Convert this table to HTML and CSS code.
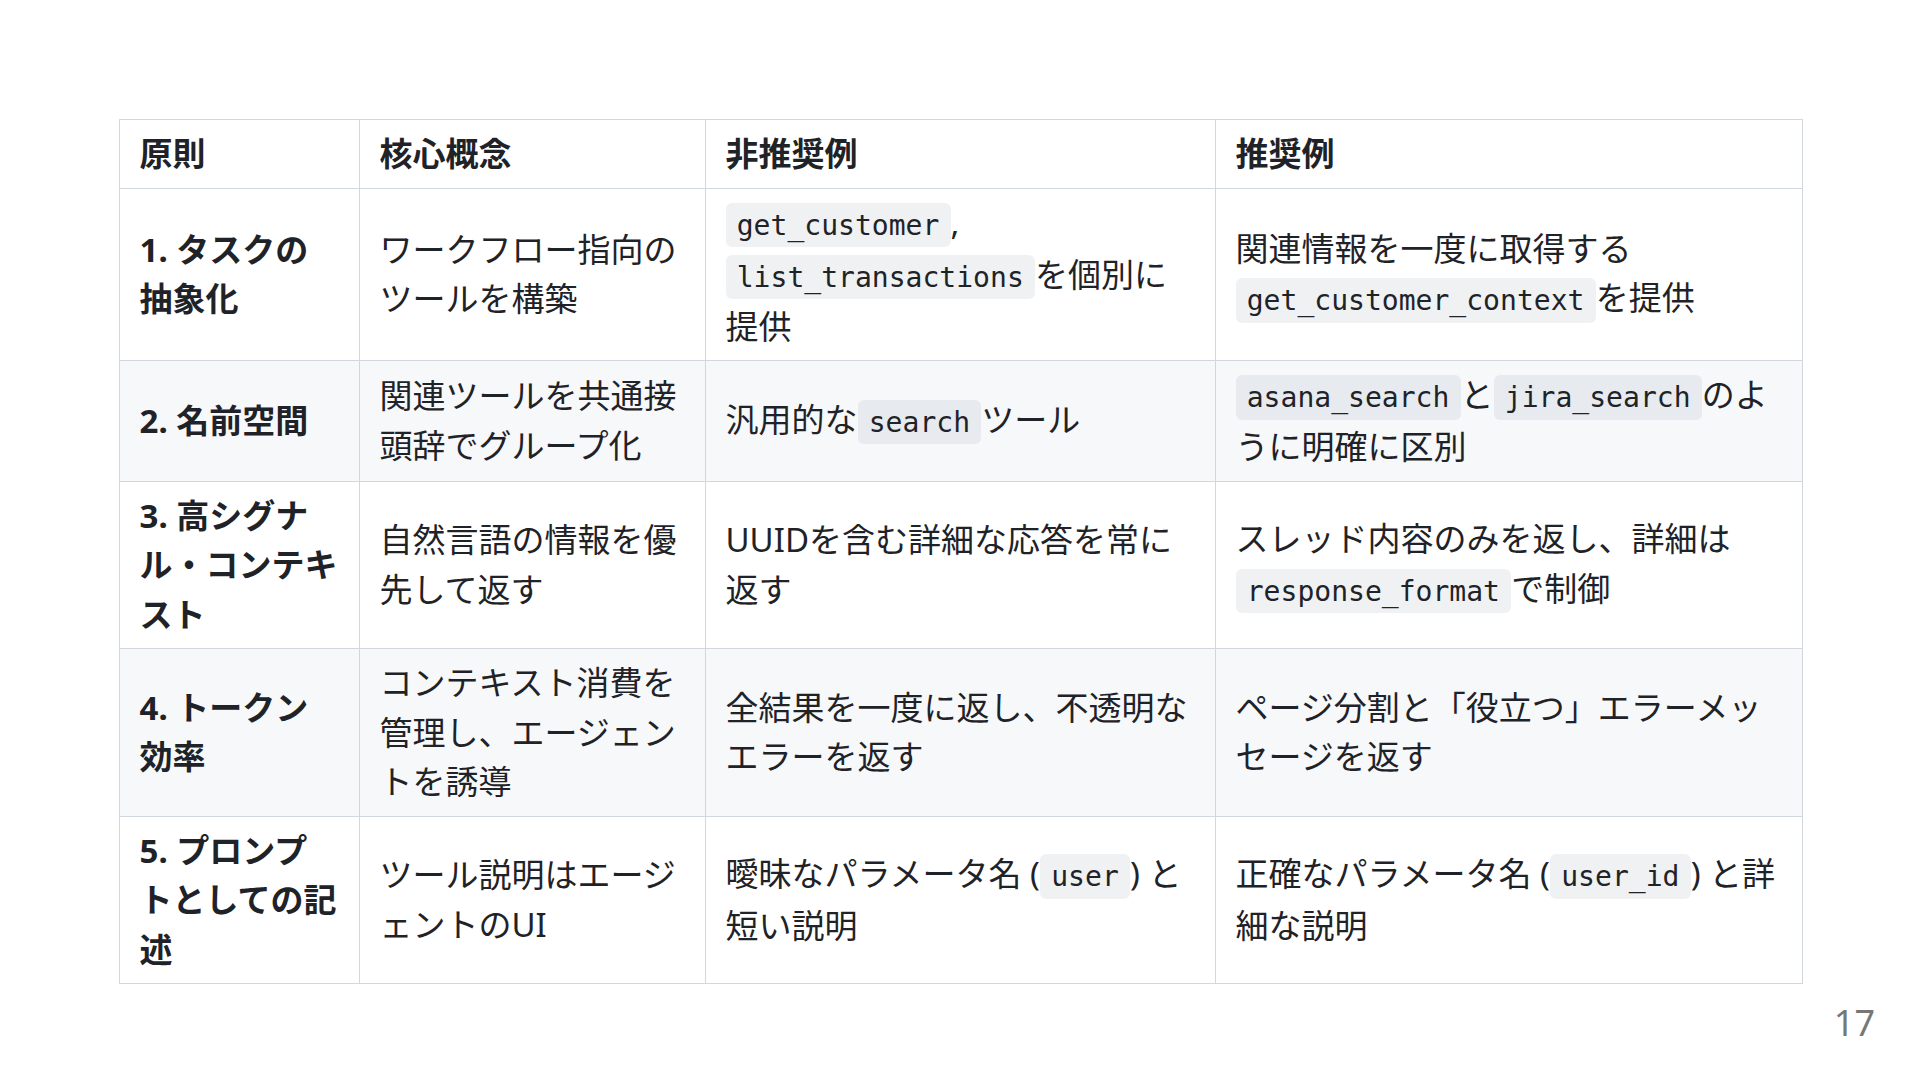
FILE: index.html
```html
<!DOCTYPE html>
<html lang="ja">
<head>
<meta charset="utf-8">
<title>Slide 17</title>
<link rel="stylesheet" href="styles.css">
</head>
<body>
<section class="slide">
  <table class="grid">
    <colgroup>
      <col class="c1"><col class="c2"><col class="c3"><col class="c4">
    </colgroup>
    <thead>
      <tr><th>原則</th><th>核心概念</th><th>非推奨例</th><th>推奨例</th></tr>
    </thead>
    <tbody>
      <tr>
        <td><strong>1. タスクの抽象化</strong></td>
        <td>ワークフロー指向のツールを構築</td>
        <td><code>get_customer</code>, <code>list_transactions</code>を個別に提供</td>
        <td>関連情報を一度に取得する<code>get_customer_context</code>を提供</td>
      </tr>
      <tr>
        <td><strong>2. 名前空間</strong></td>
        <td>関連ツールを共通接頭辞でグループ化</td>
        <td>汎用的な<code>search</code>ツール</td>
        <td><code>asana_search</code>と<code>jira_search</code>のように明確に区別</td>
      </tr>
      <tr>
        <td><strong>3. 高シグナル・コンテキスト</strong></td>
        <td>自然言語の情報を優先して返す</td>
        <td>UUIDを含む詳細な応答を常に返す</td>
        <td>スレッド内容のみを返し、詳細は<code>response_format</code>で制御</td>
      </tr>
      <tr>
        <td><strong>4. トークン効率</strong></td>
        <td>コンテキスト消費を管理し、エージェントを誘導</td>
        <td>全結果を一度に返し、不透明なエラーを返す</td>
        <td>ページ分割と「役立つ」エラーメッセージを返す</td>
      </tr>
      <tr>
        <td><strong>5. プロンプトとしての記述</strong></td>
        <td>ツール説明はエージェントのUI</td>
        <td>曖昧なパラメータ名 (<code>user</code>) と短い説明</td>
        <td>正確なパラメータ名 (<code>user_id</code>) と詳細な説明</td>
      </tr>
    </tbody>
  </table>
  <footer class="pager">17</footer>
</section>
</body>
</html>
```

FILE: styles.css
```css
html, body {
  margin: 0;
  padding: 0;
  background: #ffffff;
}

.slide {
  box-sizing: border-box;
  width: 1920px;
  height: 1080px;
  padding: 119px 118px 0 119px;
  display: flex;
  flex-direction: column;
  font-family: "Noto Sans", "Noto Sans CJK JP", sans-serif;
  font-size: 33px;
  line-height: 1.5;
  color: #1f2328;
}

.grid {
  width: 1683px;
  table-layout: fixed;
  border-collapse: collapse;
  border-spacing: 0;
}

.c1 { width: 240px; }
.c2 { width: 346px; }
.c3 { width: 510px; }
.c4 { width: 587px; }

.grid th,
.grid td {
  border: 1px solid #d0d7de;
  padding: 9px 19.5px;
  text-align: left;
  vertical-align: middle;
  word-break: normal;
  overflow-wrap: normal;
}

.grid th {
  font-weight: 700;
}

.grid td strong {
  font-weight: 700;
}

.grid tbody tr {
  background: #ffffff;
}

.grid tbody tr:nth-child(2n) {
  background: #f6f8fa;
}

.grid code {
  font-family: "DejaVu Sans Mono", monospace;
  font-size: 85%;
  line-height: 48px;
  padding: 0.2em 0.4em;
  margin: 0;
  border-radius: 6px;
  background: rgba(175, 184, 193, 0.2);
  white-space: nowrap;
}

.pager {
  margin-top: auto;
  align-self: flex-end;
  margin-right: -73px;
  padding-bottom: 39px;
  font-family: "Noto Sans", sans-serif;
  font-size: 36px;
  line-height: 1;
  color: #777777;
}
```
